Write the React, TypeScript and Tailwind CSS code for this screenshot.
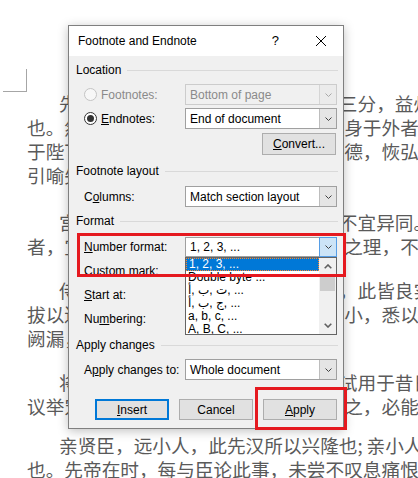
import type { ReactNode } from 'react';

const paragraphs: { mt: string; lines: ReactNode[] }[] = [
  {
    mt: '-mt-px',
    lines: [
      '先帝创业未半而中道崩殂，今天下三分，益州疲弊，此诚危急存亡之秋',
      '也。然侍卫之臣不懈于内，忠志之士忘身于外者，盖追先帝之殊遇，欲报之',
      '于陛下也。诚宜开张圣听，以光先帝遗德，恢弘志士之气，不宜妄自菲薄，',
      '引喻失义，以塞忠谏之路也。',
    ],
  },
  {
    mt: 'mt-[23px]',
    lines: [
      '宫中府中，俱为一体，陟罚臧否，不宜异同。若有作奸犯科及为忠善',
      '者，宜付有司论其刑赏，以昭陛下平明之理，不宜偏私，使内外异法也。',
    ],
  },
  {
    mt: 'mt-[20px]',
    lines: [
      '侍中、侍郎郭攸之、费祎、董允等，此皆良实，志虑忠纯，是以先帝简',
      '拔以遗陛下。愚以为宫中之事，事无大小，悉以咨之，然后施行，必能裨补',
      '阙漏，有所广益。',
    ],
  },
  {
    mt: 'mt-[20px]',
    lines: [
      '将军向宠，性行淑均，晓畅军事，试用于昔日，先帝称之曰能，是以众',
      '议举宠为督。愚以为营中之事，悉以咨之，必能使行阵和睦，优劣得所。',
    ],
  },
  {
    mt: 'mt-[15px]',
    lines: [
      <>
        亲贤臣，远小人，此先汉所以兴隆也<span className="inline-block w-[9px]">;</span>亲小人，远贤臣，此后汉所以倾颓
      </>,
      '也。先帝在时，每与臣论此事，未尝不叹息痛恨于桓、灵也。',
    ],
  },
];

const listItems: ReactNode[] = [
  '1, 2, 3, ...',
  'Double byte ...',
  <bdo dir="ltr">أ, ب, ت, ...</bdo>,
  <bdo dir="ltr">أ, ب, ج, ...</bdo>,
  'a, b, c, ...',
  'A, B, C, ...',
];

function Chevron({ color = '#404040' }: { color?: string }) {
  return (
    <svg width="7" height="4" viewBox="0 0 7 4" fill="none">
      <path d="M0.5 0.5L3.5 3.5L6.5 0.5" stroke={color} strokeWidth="1" />
    </svg>
  );
}

function Combo({ value, disabled, open }: { value: string; disabled?: boolean; open?: boolean }) {
  return (
    <div
      className={`flex h-full w-[152px] border ${
        disabled ? 'border-[#cccccc] bg-[#f0f0f0] text-[#8a8a8a]' : 'border-[#a0a0a0] bg-white text-black'
      }`}
    >
      <span className="flex flex-1 items-center whitespace-nowrap pl-[4px]">{value}</span>
      {open ? (
        <span className="-my-px -mr-px flex w-[18px] items-center justify-center border border-[#569de5] bg-[#cce4f7]">
          <Chevron />
        </span>
      ) : (
        <span
          className={`flex w-[17px] items-center justify-center border-l ${
            disabled ? 'border-[#d5d5d5] bg-[#ebebeb]' : 'border-[#bdbdbd] bg-[#e5e5e5]'
          }`}
        >
          <Chevron color={disabled ? '#a8a8a8' : '#404040'} />
        </span>
      )}
    </div>
  );
}

function Group({ title, className }: { title: string; className: string }) {
  return (
    <div className={`flex h-[16px] items-center gap-[6px] pl-[7px] pr-[5px] ${className}`}>
      <span>{title}</span>
      <div className="h-px flex-1 bg-[#d9d9d9]" />
    </div>
  );
}

function Row({ label, children, className }: { label: ReactNode; children?: ReactNode; className: string }) {
  return (
    <div className={`flex items-center pl-[15px] pr-[6px] ${className}`}>
      <span className="flex-1 whitespace-nowrap">{label}</span>
      {children}
    </div>
  );
}

function Button({ children, focused }: { children: ReactNode; focused?: boolean }) {
  return (
    <div
      className={`flex h-[21px] w-[74px] items-center justify-center bg-[#e1e1e1] ${
        focused ? 'border-2 border-[#0078d7]' : 'border border-[#adadad]'
      }`}
    >
      {children}
    </div>
  );
}

function NumberList() {
  return (
    <div className="absolute left-0 top-full z-10 flex h-[78px] w-[152px] overflow-hidden border border-[#646464] bg-white">
      <div className="flex-1">
        {listItems.map((item, i) => (
          <div
            key={i}
            className={`flex h-[13px] items-center whitespace-nowrap pl-[2px] leading-[13px] ${
              i === 0 ? 'border border-dotted border-[#ff8728] bg-[#0078d7] pl-[1px] text-white' : 'text-black'
            }`}
          >
            {item}
          </div>
        ))}
      </div>
      <div className="flex w-[17px] flex-col bg-[#f0f0f0]">
        <div className="flex h-[17px] items-center justify-center">
          <svg width="8" height="5" viewBox="0 0 8 5" fill="none">
            <path d="M0.7 4.3L4 1L7.3 4.3" stroke="#606060" strokeWidth="1.6" />
          </svg>
        </div>
        <div className="mx-[1px] mt-[2px] h-[14px] bg-[#cdcdcd]" />
        <div className="flex-1" />
        <div className="flex h-[17px] items-center justify-center">
          <svg width="8" height="5" viewBox="0 0 8 5" fill="none">
            <path d="M0.7 0.7L4 4L7.3 0.7" stroke="#606060" strokeWidth="1.6" />
          </svg>
        </div>
      </div>
    </div>
  );
}

export default function App() {
  return (
    <div className="relative h-[478px] w-[418px] overflow-hidden bg-white">
      <div className="pl-[27px] pt-[69px] font-['Noto_Sans_CJK_SC',sans-serif] text-[18.67px] text-[#5a5a5a]">
        <div className="-ml-[24px] h-[23px] w-[24px] border-b border-r border-[#a6a6a6]" />
        {paragraphs.map((p, i) => (
          <div key={i} className={p.mt}>
            {p.lines.map((line, j) => (
              <div key={j} className={`h-[24px] whitespace-nowrap leading-[24px] ${j === 0 ? 'pl-[32px]' : ''}`}>
                {line}
              </div>
            ))}
          </div>
        ))}
      </div>

      <div className="absolute left-[68px] top-[25px] flex h-[404px] w-[276px] flex-col border border-[#7f7f7f] bg-[#f0f0f0] font-['Liberation_Sans','DejaVu_Sans',sans-serif] text-[12px] text-black shadow-[0_2px_10px_rgba(0,0,0,0.25)]">
        <div className="flex h-[30px] items-center bg-white pl-[9px] pr-[17px]">
          <span className="flex-1">Footnote and Endnote</span>
          <span className="mr-[37px] text-[13px]">?</span>
          <svg width="10" height="10" viewBox="0 0 10 10" fill="none">
            <path d="M0 0L10 10M10 0L0 10" stroke="#000" strokeWidth="1" />
          </svg>
        </div>

        <Group title="Location" className="mt-[6px]" />
        <div className="mt-[6px] flex h-[21px] items-center pl-[15px] pr-[6px]">
          <span className="h-[13px] w-[13px] rounded-full border border-[#c4c4c4] bg-[#f7f7f7]" />
          <span className="ml-[4px] flex-1 text-[#8a8a8a]">Footnotes:</span>
          <Combo value="Bottom of page" disabled />
        </div>
        <div className="mt-[3px] flex h-[21px] items-center pl-[15px] pr-[6px]">
          <span className="flex h-[13px] w-[13px] items-center justify-center rounded-full border border-[#333333] bg-white">
            <span className="h-[7px] w-[7px] rounded-full bg-[#333333]" />
          </span>
          <span className="ml-[4px] flex-1">
            <span className="underline">E</span>ndnotes:
          </span>
          <Combo value="End of document" />
        </div>
        <div className="mt-[4px] flex justify-end pr-[7px]">
          <div className="flex h-[22px] w-[74px] items-center justify-center border border-[#adadad] bg-[#e1e1e1]">
            <span>
              <span className="underline">C</span>onvert...
            </span>
          </div>
        </div>

        <Group title="Footnote layout" className="mt-[8px]" />
        <Row
          className="mt-[7px] h-[21px]"
          label={
            <>
              C<span className="underline">o</span>lumns:
            </>
          }
        >
          <Combo value="Match section layout" />
        </Row>

        <Group title="Format" className="mt-[6px]" />
        <Row
          className="mt-[8px] h-[20px]"
          label={
            <>
              <span className="underline">N</span>umber format:
            </>
          }
        >
          <div className="relative h-full">
            <Combo value="1, 2, 3, ..." open />
            <NumberList />
          </div>
        </Row>
        <Row className="mt-[4px] h-[20px]" label="Custom mark:" />
        <Row
          className="mt-[4px] h-[20px]"
          label={
            <>
              <span className="underline">S</span>tart at:
            </>
          }
        />
        <Row
          className="mt-[4px] h-[20px]"
          label={
            <>
              Nu<span className="underline">m</span>bering:
            </>
          }
        />

        <Group title="Apply changes" className="mt-[8px]" />
        <Row
          className="mt-[6px] h-[21px]"
          label={
            <>
              A<span className="underline">p</span>ply changes to:
            </>
          }
        >
          <Combo value="Whole document" />
        </Row>

        <div className="mt-[19px] flex justify-end gap-[10px] pr-[6px]">
          <Button focused>
            <span>
              <span className="underline">I</span>nsert
            </span>
          </Button>
          <Button>Cancel</Button>
          <Button>
            <span>
              <span className="underline">A</span>pply
            </span>
          </Button>
        </div>
      </div>

      <div className="absolute left-[77px] top-[233px] z-20 h-[44px] w-[269px] border-[3px] border-[#e5191f]" />
      <div className="absolute left-[255px] top-[387px] z-20 h-[43px] w-[92px] border-[3px] border-[#e5191f]" />
    </div>
  );
}
